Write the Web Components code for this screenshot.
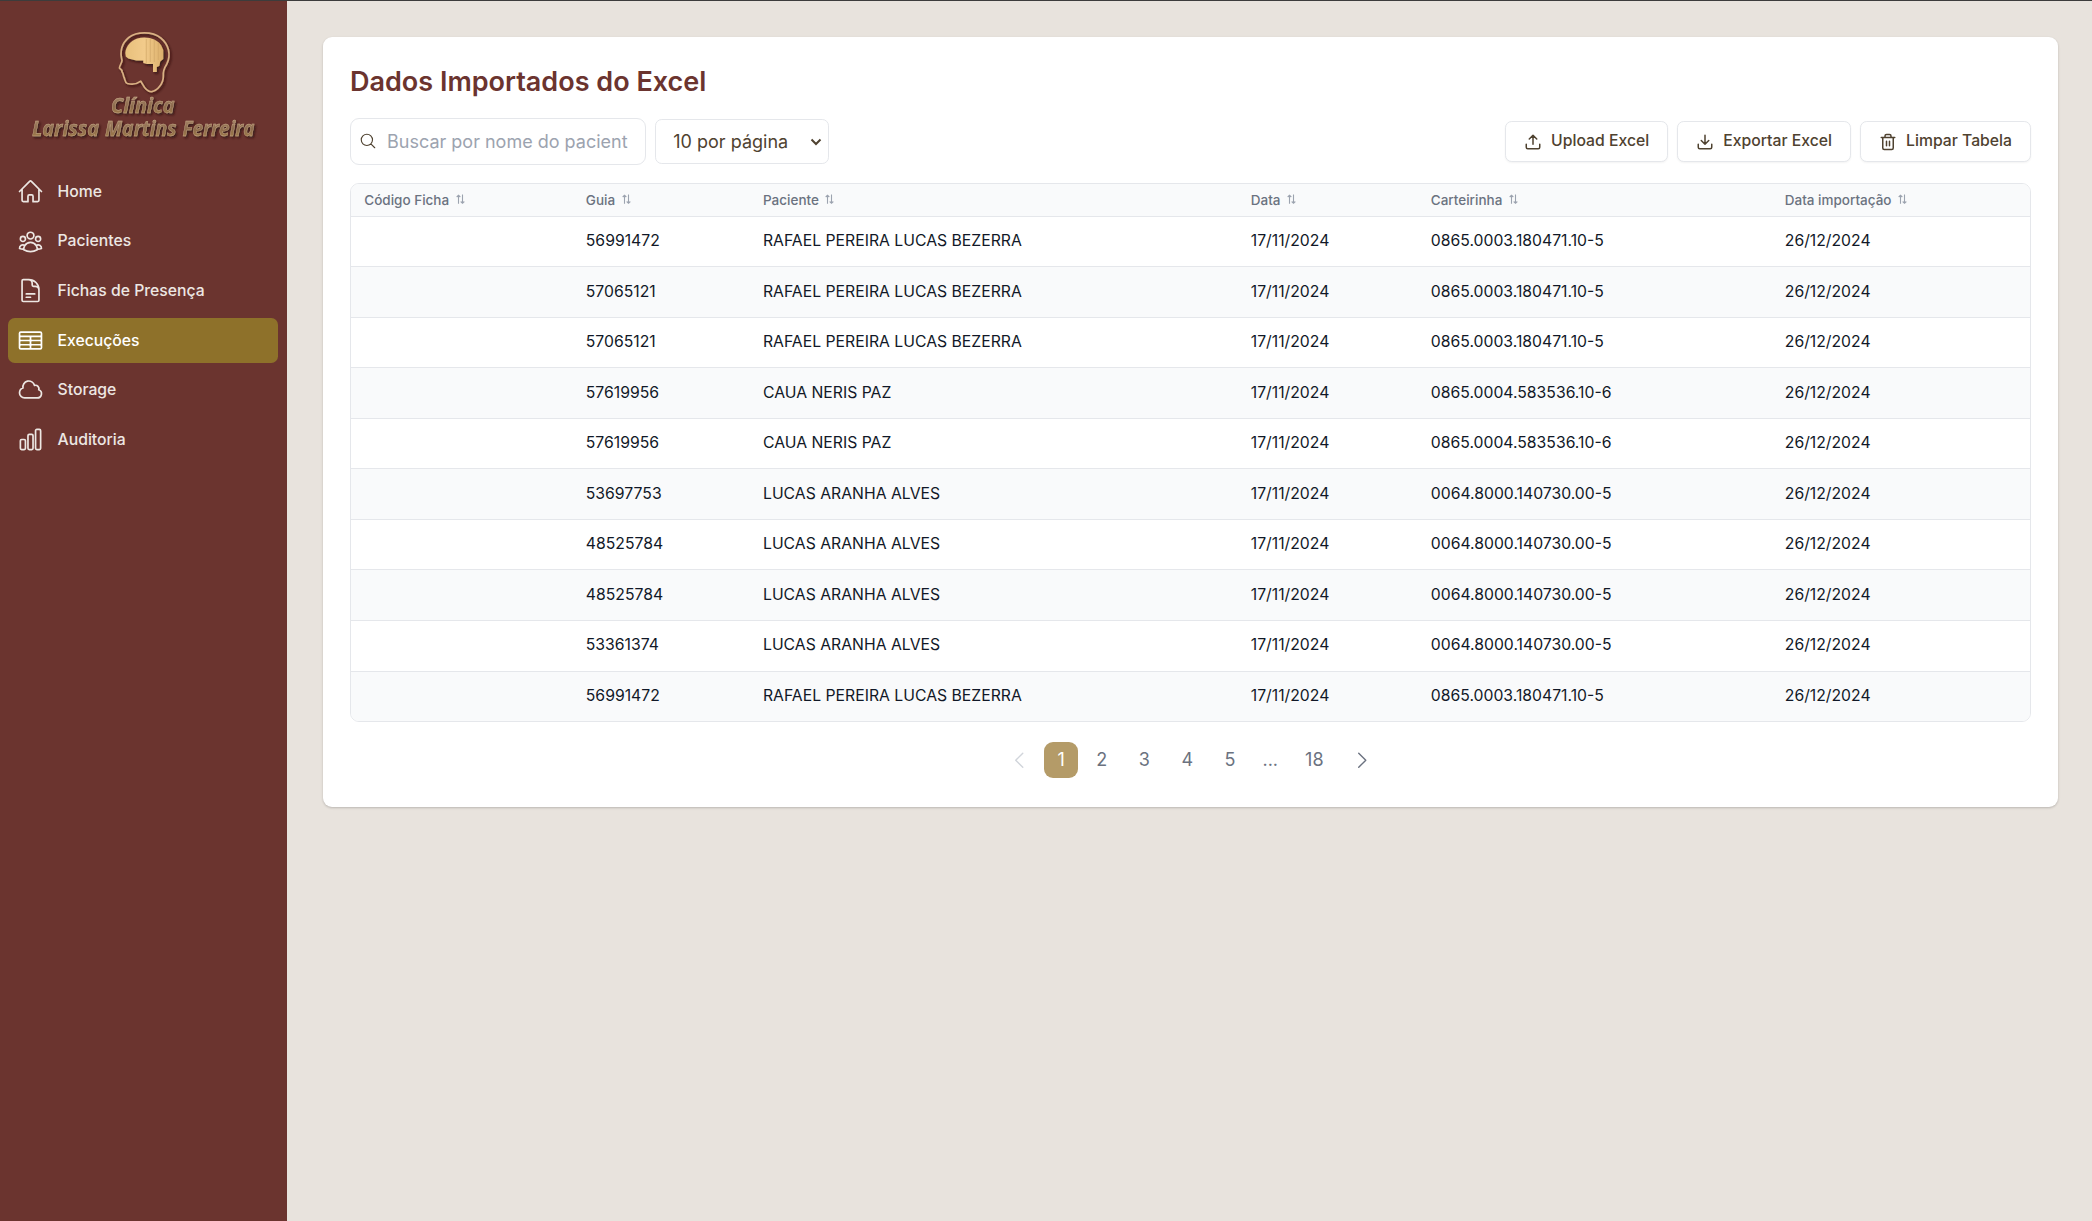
<!DOCTYPE html>
<html lang="pt-BR">
<head>
<meta charset="utf-8">
<title>Dados Importados do Excel</title>
<style>
html,body{margin:0;height:100%}
body{font-family:Inter,"Liberation Sans",sans-serif;background:#e8e3dd;color:#4f4230}
</style>
</head>
<body>
<clinic-app></clinic-app>
<script>
const ICONS = {
  home: 'M2.25 12l8.954-8.955c.44-.439 1.152-.439 1.591 0L21.75 12M4.5 9.75v10.125c0 .621.504 1.125 1.125 1.125H9.75v-4.875c0-.621.504-1.125 1.125-1.125h2.25c.621 0 1.125.504 1.125 1.125V21h4.125c.621 0 1.125-.504 1.125-1.125V9.75',
  users: 'M18 18.72a9.094 9.094 0 003.741-.479 3 3 0 00-4.682-2.72m.94 3.198l.001.031c0 .225-.012.447-.037.666A11.944 11.944 0 0112 21c-2.17 0-4.207-.576-5.963-1.584A6.062 6.062 0 016 18.719m12 0a5.971 5.971 0 00-.941-3.197m0 0A5.995 5.995 0 0012 12.75a5.995 5.995 0 00-5.058 2.772m0 0a3 3 0 00-4.681 2.72 8.986 8.986 0 003.74.477m.94-3.197a5.971 5.971 0 00-.94 3.197M15 6.75a3 3 0 11-6 0 3 3 0 016 0zm6 3a2.25 2.25 0 11-4.5 0 2.25 2.25 0 014.5 0zm-13.5 0a2.25 2.25 0 11-4.5 0 2.25 2.25 0 014.5 0z',
  doc: 'M19.5 14.25v-2.625a3.375 3.375 0 00-3.375-3.375h-1.5A1.125 1.125 0 0113.5 7.125v-1.5a3.375 3.375 0 00-3.375-3.375H8.25m0 12.75h7.5m-7.5 3H12M10.5 2.25H5.625c-.621 0-1.125.504-1.125 1.125v17.25c0 .621.504 1.125 1.125 1.125h12.75c.621 0 1.125-.504 1.125-1.125V11.25a9 9 0 00-9-9z',
  table: 'M3.375 19.5h17.25m-17.25 0a1.125 1.125 0 01-1.125-1.125M3.375 19.5h7.5c.621 0 1.125-.504 1.125-1.125m-9.75 0V5.625m0 12.75v-1.5c0-.621.504-1.125 1.125-1.125m18.375 2.625V5.625m0 12.75c0 .621-.504 1.125-1.125 1.125m1.125-1.125v-1.5c0-.621-.504-1.125-1.125-1.125m0 3.75h-7.5A1.125 1.125 0 0112 18.375m9.75-12.75c0-.621-.504-1.125-1.125-1.125H3.375c-.621 0-1.125.504-1.125 1.125m19.5 0v1.5c0 .621-.504 1.125-1.125 1.125M2.25 5.625v1.5c0 .621.504 1.125 1.125 1.125m0 0h17.25m-17.25 0h7.5c.621 0 1.125.504 1.125 1.125M3.375 8.25c-.621 0-1.125.504-1.125 1.125v1.5c0 .621.504 1.125 1.125 1.125m17.25-3.75h-7.5c-.621 0-1.125.504-1.125 1.125m8.625-1.125c.621 0 1.125.504 1.125 1.125v1.5c0 .621-.504 1.125-1.125 1.125m-17.25 0h7.5m-7.5 0c-.621 0-1.125.504-1.125 1.125v1.5c0 .621.504 1.125 1.125 1.125M12 10.875v-1.5m0 1.5c0 .621-.504 1.125-1.125 1.125M12 10.875c0 .621.504 1.125 1.125 1.125m-2.25 0c.621 0 1.125.504 1.125 1.125M13.125 12h7.5m-7.5 0c-.621 0-1.125.504-1.125 1.125M20.625 12c.621 0 1.125.504 1.125 1.125v1.5c0 .621-.504 1.125-1.125 1.125m-17.25 0h7.5M12 14.625v-1.5m0 1.5c0 .621-.504 1.125-1.125 1.125M12 14.625c0 .621.504 1.125 1.125 1.125m-2.25 0c.621 0 1.125.504 1.125 1.125m0 1.5v-1.5m0 0c0-.621.504-1.125 1.125-1.125m0 0h7.5',
  cloud: 'M2.25 15a4.5 4.5 0 004.5 4.5H18a3.75 3.75 0 001.332-7.257 3 3 0 00-3.758-3.848 5.25 5.25 0 00-10.233 2.33A4.502 4.502 0 002.25 15z',
  chart: 'M3 13.125C3 12.504 3.504 12 4.125 12h2.25c.621 0 1.125.504 1.125 1.125v6.75C7.5 20.496 6.996 21 6.375 21h-2.25A1.125 1.125 0 013 19.875v-6.75zM9.75 8.625c0-.621.504-1.125 1.125-1.125h2.25c.621 0 1.125.504 1.125 1.125v11.25c0 .621-.504 1.125-1.125 1.125h-2.25a1.125 1.125 0 01-1.125-1.125V8.625zM16.5 4.125c0-.621.504-1.125 1.125-1.125h2.25C20.496 3 21 3.504 21 4.125v15.75c0 .621-.504 1.125-1.125 1.125h-2.25a1.125 1.125 0 01-1.125-1.125V4.125z',
  search: 'M21 21l-5.197-5.197m0 0A7.5 7.5 0 105.196 5.196a7.5 7.5 0 0010.607 10.607z',
  left: 'M15.750 19.500L8.250 12l7.500-7.500',
  right: 'M8.250 4.500l7.500 7.500-7.500 7.500',
  upload: 'M21 15v4a2 2 0 0 1-2 2H5a2 2 0 0 1-2-2v-4M17 8l-5-5-5 5M12 3v12',
  download: 'M21 15v4a2 2 0 0 1-2 2H5a2 2 0 0 1-2-2v-4M7 10l5 5 5-5M12 15V3',
  trash: 'M3 6h18M19 6v14a2 2 0 0 1-2 2H7a2 2 0 0 1-2-2V6M8 6V4a2 2 0 0 1 2-2h4a2 2 0 0 1 2 2v2M10 11v6M14 11v6'
};
function define(name, render){
  customElements.define(name, class extends HTMLElement{
    connectedCallback(){
      if(this.shadowRoot) return;
      this.attachShadow({mode:'open'}).innerHTML = render(this);
    }
  });
}
define('ui-icon', el => `<style>:host{display:block;flex:none;width:var(--size,18px);height:var(--size,18px)}svg{display:block;width:100%;height:100%}</style>
<svg viewBox="0 0 24 24" fill="none" stroke="currentColor" stroke-width="${el.getAttribute('weight')||1.5}" stroke-linecap="round" stroke-linejoin="round"><path d="${ICONS[el.getAttribute('name')]}"/></svg>`);
define('sort-icon', () => `<style>:host{display:block;flex:none;width:9px;height:11px;color:#9ca3af}svg{display:block}</style>
<svg width="9" height="11" viewBox="0 0 9 11" fill="none" stroke="currentColor" stroke-width="1.100"><path d="M2.500 9.700V1.200M.7 3 2.500 1.200 4.300 3M6.500 .6V9.100M4.700 7.500 6.500 9.300 8.300 7.500"/></svg>`);
define('clinic-logo', () => `<style>:host{display:block;height:160px;width:287px}svg{display:block}
text{font-family:"Open Sans","Noto Sans",sans-serif;font-weight:700;font-style:italic}</style>
<svg width="287" height="160" viewBox="0 0 287 160">
<defs>
<linearGradient id="gold" x1="0" y1="0" x2="0" y2="1"><stop offset="0" stop-color="#b39377"/><stop offset=".55" stop-color="#8d6b4d"/><stop offset="1" stop-color="#ab8549"/></linearGradient>
<linearGradient id="brain" x1="0" y1="0" x2="1" y2="0"><stop offset="0" stop-color="#e8c07c"/><stop offset=".5" stop-color="#f2cb8b"/><stop offset="1" stop-color="#dcb06c"/></linearGradient>
<filter id="sh" x="-20%" y="-20%" width="140%" height="150%"><feDropShadow dx="1.6" dy="1.8" stdDeviation=".9" flood-color="#2c1410" flood-opacity=".75"/></filter>
</defs>
<g filter="url(#sh)" transform="translate(-.7 -1)">
<path d="M141.500 81.200C138.500 83.500 133 84.800 128 83.500C125.500 82.700 125.800 79.500 124.800 77.500C123.500 75.500 124.500 74 122.800 72C123 70.500 122.500 69.800 120.300 68.300C119.300 67.300 122.500 63 122.700 60.500C120 50 123.500 42.500 129.500 37.500C137 31.500 153 31 161.500 38C169.500 44.500 172 55 167.500 64C165 68 163.500 71.500 164 76C164.200 84 157.500 91 152.500 91.700C146 92.500 143.500 84 141.500 81.200Z" fill="none" stroke="#d9b083" stroke-width="1.700" stroke-linejoin="round"/>
<path d="M126 53C126.500 46 131.500 41 138 38.500C148 36 157.500 39 162 45.500L164 50V59L161 61.500L160 66L157.500 67V72H153.700V64H148L144 63V60.500H137L129 58.500L126.500 56.500Z" fill="url(#brain)"/>
<path d="M147 39V63M151 39V62M155 40V62M159 43V60" stroke="#cda263" stroke-width=".6"/>
</g>
<g filter="url(#sh)" fill="url(#gold)" stroke="#cbb08c" stroke-width=".4">
<text y="112" font-size="21"><tspan x="111" textLength="63.500" lengthAdjust="spacingAndGlyphs">Clínica</tspan></text>
<text y="134.700" font-size="21"><tspan x="32" textLength="67" lengthAdjust="spacingAndGlyphs">Larissa</tspan> <tspan x="105" textLength="71.500" lengthAdjust="spacingAndGlyphs">Martins</tspan> <tspan x="182.500" textLength="72" lengthAdjust="spacingAndGlyphs">Ferreira</tspan></text>
</g></svg>`);
define('nav-item', el => `<style>
:host{display:flex;align-items:center;box-sizing:border-box;height:45px;padding:0 9px;gap:13.500px;border-radius:6.750px;color:#ede7e3;font-size:15.750px;font-weight:500;line-height:22.500px;--size:27px}
:host([active]){background:#8e712a;color:#fff}
span{display:block;margin-top:1.300px}
</style><ui-icon name="${el.getAttribute('icon')}"></ui-icon><span><slot></slot></span>`);
define('side-bar', () => `<style>
:host{display:flex;flex-direction:column;width:287px;flex:none;background:#6b342f}
nav{display:flex;flex-direction:column;gap:4.600px;padding:8px 9px 0 8px}
</style><clinic-logo></clinic-logo>
<nav><nav-item icon="home">Home</nav-item><nav-item icon="users">Pacientes</nav-item><nav-item icon="doc">Fichas de Presença</nav-item><nav-item icon="table" active>Execuções</nav-item><nav-item icon="cloud">Storage</nav-item><nav-item icon="chart">Auditoria</nav-item></nav>`);
define('search-box', () => `<style>
:host{display:flex;align-items:center;box-sizing:border-box;width:296px;height:47px;border:1px solid #e5e7eb;border-radius:9px;padding:0 17px 0 8px;--size:18px}
input{flex:1;min-width:0;border:0;outline:0;padding:0;margin-left:10px;background:none;font:400 18px/27px Inter,sans-serif;height:27px;color:#4f4230}
input::placeholder{color:#9ca3af;opacity:1}
ui-icon{margin-top:-2px}
</style><ui-icon name="search"></ui-icon><input placeholder="Buscar por nome do paciente...">`);
define('page-size', () => `<style>
:host{display:flex;align-items:center;justify-content:space-between;box-sizing:border-box;width:174px;height:45px;border:1px solid #e5e7eb;border-radius:6.750px;padding:0 6px 0 17.300px;font-size:18px;line-height:27px}
svg{display:block}
</style><span><slot></slot></span><svg width="12" height="8" viewBox="0 0 12 8" fill="none" stroke="currentColor" stroke-width="2"><path d="M1.500 1.500 6 6 10.500 1.500"/></svg>`);
define('tool-button', el => `<style>
:host{display:flex;align-items:center;box-sizing:border-box;height:41px;border:1px solid #e5e7eb;border-radius:6.750px;background:#fff;padding:0 18px;gap:9px;font-size:15.750px;font-weight:500;line-height:22.500px;box-shadow:0 1px 2px rgba(0,0,0,.05);--size:18px}
span{display:block;margin-top:-1px}
ui-icon{margin-top:1px}
</style><ui-icon name="${el.getAttribute('icon')}" weight="2"></ui-icon><span><slot></slot></span>`);
const COLS = ['Código Ficha','Guia','Paciente','Data','Carteirinha','Data importação'];
const R='RAFAEL PEREIRA LUCAS BEZERRA', C='CAUA NERIS PAZ', L='LUCAS ARANHA ALVES';
const r='0865.0003.180471.10-5', c='0865.0004.583536.10-6', l='0064.8000.140730.00-5';
const ROWS = [['56991472',R,r],['57065121',R,r],['57065121',R,r],['57619956',C,c],['57619956',C,c],['53697753',L,l],['48525784',L,l],['48525784',L,l],['53361374',L,l],['56991472',R,r]];
define('data-table', () => `<style>
:host{display:block;border:1px solid #e5e7eb;border-radius:9px;overflow:hidden}
.row{display:grid;grid-template-columns:221.500px 177.200px 487.800px 180px 354px 1fr;padding-left:13.300px;box-sizing:border-box;height:50.550px;align-items:center;border-top:1px solid #e5e7eb;color:#111827;font-size:15.750px;line-height:22.500px}
.row.alt{background:#f9fafb}
.row.head{height:31.600px;border:0;background:#f9fafb;color:#6b7280;font-size:13.500px;font-weight:500;line-height:18px}
.row.head div{display:flex;align-items:center;gap:6.500px}
.row:not(.head) div{margin-top:-.2px}
</style><div class="row head">${COLS.map(t=>`<div><span>${t}</span><sort-icon></sort-icon></div>`).join('')}</div>
${ROWS.map(([g,p,k],i)=>`<div class="row${i%2?' alt':''}"><div></div><div>${g}</div><div>${p}</div><div>17/11/2024</div><div>${k}</div><div>26/12/2024</div></div>`).join('')}`);
define('page-nav', () => `<style>
:host{display:flex;align-items:center;justify-content:center;gap:4.500px;height:36px;font-size:18px;line-height:36px;color:#6b7280;--size:22.500px}
b{display:block;font-weight:400;padding:0 13.500px;border-radius:9px}
.on{background:#b49b68;color:#fff}
ui-icon{margin:0 9px}
.prev{color:#d1d5db}
.dots{padding:0 9px}
</style><ui-icon class="prev" name="left"></ui-icon><b class="on">1</b><b>2</b><b>3</b><b>4</b><b>5</b><b class="dots">...</b><b>18</b><ui-icon name="right"></ui-icon>`);
define('data-card', () => `<style>
:host{display:block;box-sizing:border-box;height:770px;background:#fff;border-radius:9px;padding:27px 27px 0;box-shadow:0 1px 3px rgba(0,0,0,.1),0 1px 2px rgba(0,0,0,.1)}
h1{margin:0;font-size:27px;line-height:36px;font-weight:600;color:#6b342f}
.tools{display:flex;align-items:center;gap:9px;margin:18px 0}
.sp{flex:1}
page-nav{margin-top:20px}
</style><h1>Dados Importados do Excel</h1>
<div class="tools"><search-box></search-box><page-size>10 por página</page-size><div class="sp"></div><tool-button icon="upload">Upload Excel</tool-button><tool-button icon="download">Exportar Excel</tool-button><tool-button icon="trash">Limpar Tabela</tool-button></div>
<data-table></data-table><page-nav></page-nav>`);
define('clinic-app', () => `<style>
:host{display:flex;height:100vh;box-sizing:border-box;border-top:1px solid #3c3c3c}
main{flex:1;min-width:0;padding:36px 34px 0 36px}
</style><side-bar></side-bar><main><data-card></data-card></main>`);
</script>
</body>
</html>
